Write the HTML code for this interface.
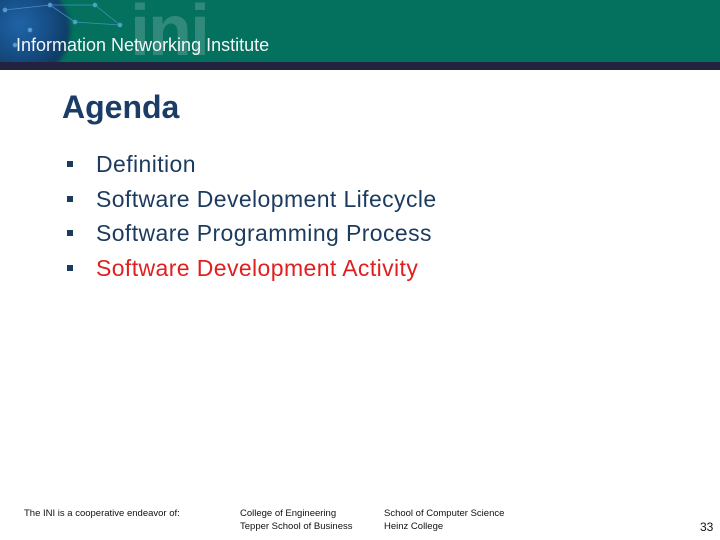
<!DOCTYPE html>
<html><head><meta charset="utf-8"><style>
html,body{margin:0;padding:0;}
body{width:720px;height:540px;position:relative;background:#fff;font-family:"Liberation Sans",Arial,sans-serif;overflow:hidden;}
.hdr{position:absolute;left:0;top:0;width:720px;height:62px;background:#04705e;overflow:hidden;}
.globe{position:absolute;left:-30px;top:-20px;width:100px;height:100px;border-radius:50%;background:radial-gradient(circle at 50% 45%,#1f64a8 0%,#154a80 45%,#0d3a5e 70%,rgba(4,112,94,0) 100%);filter:blur(2px);}
.ini{position:absolute;left:130px;top:-10px;font-size:72px;font-weight:bold;color:rgba(255,255,255,0.18);letter-spacing:-2px;}
.title{position:absolute;left:16px;top:35px;font-size:18px;color:#f4f6f8;}
.bar{position:absolute;left:0;top:62px;width:720px;height:8px;background:#23233f;}
.url{position:absolute;right:16px;top:62px;font-size:6px;color:#fff;line-height:8px;}
h1{position:absolute;left:62px;top:89px;margin:0;font-size:32px;font-weight:bold;color:#1b3c66;}
.items{position:absolute;left:64px;top:151px;font-size:23px;color:#1c3b5e;letter-spacing:0.4px;}
.items div{height:34.5px;position:relative;padding-left:32px;}
.items span.b{position:absolute;left:3px;top:10px;width:6px;height:6px;background:#1c3b5e;}
.red{color:#e02020;}
.f{position:absolute;font-size:9.5px;color:#111;line-height:13px;}
</style></head><body>
<div class="hdr">
<div class="globe"></div>
<svg style="position:absolute;left:0;top:0" width="140" height="62"><g stroke="#5aa7d8" stroke-width="0.8" opacity="0.7" fill="#6ec0f0"><line x1="5" y1="10" x2="50" y2="5"/><line x1="50" y1="5" x2="95" y2="5"/><line x1="95" y1="5" x2="120" y2="25"/><line x1="50" y1="5" x2="75" y2="22"/><line x1="75" y1="22" x2="120" y2="25"/><circle cx="5" cy="10" r="2"/><circle cx="50" cy="5" r="2"/><circle cx="95" cy="5" r="2"/><circle cx="120" cy="25" r="2"/><circle cx="75" cy="22" r="2"/><circle cx="30" cy="30" r="2"/><circle cx="15" cy="45" r="2"/></g></svg>
<div class="ini">ini</div>
<div class="title">Information Networking Institute</div>
</div>
<div class="bar"><span class="url">www.ini.cmu.edu</span></div>
<h1>Agenda</h1>
<div class="items">
<div><span class="b"></span>Definition</div>
<div><span class="b"></span>Software Development Lifecycle</div>
<div><span class="b"></span>Software Programming Process</div>
<div><span class="b"></span><span class="red">Software Development Activity</span></div>
</div>
<div class="f" style="left:24px;top:507px">The INI is a cooperative endeavor of:</div>
<div class="f" style="left:240px;top:507px">College of Engineering<br>Tepper School of Business</div>
<div class="f" style="left:384px;top:507px">School of Computer Science<br>Heinz College</div>
<div class="f" style="left:700px;top:521px;font-size:12px">33</div>
</body></html>
